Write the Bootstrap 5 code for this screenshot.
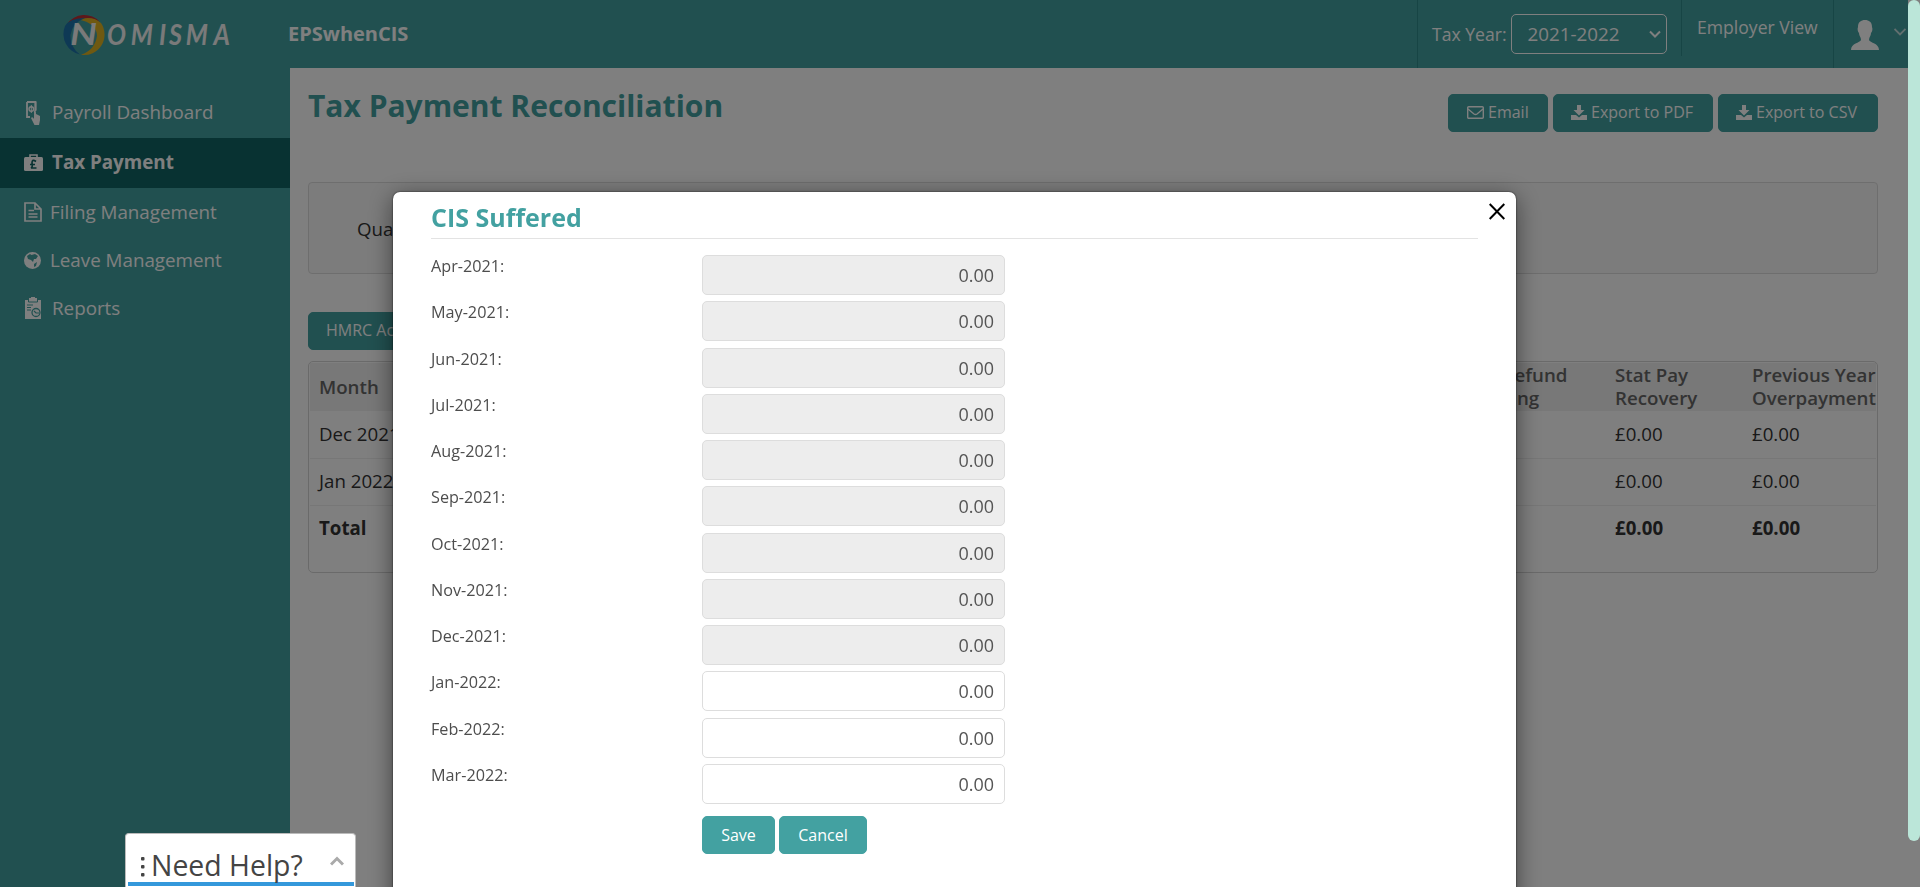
<!DOCTYPE html>
<html lang="en">
<head>
<meta charset="utf-8">
<meta name="viewport" content="width=device-width, initial-scale=1">
<title>Tax Payment Reconciliation</title>
<link href="https://cdn.jsdelivr.net/npm/bootstrap@5.3.0/dist/css/bootstrap.min.css" rel="stylesheet">
<style>
  html, body { height: 100%; overflow: hidden; }
  body { font-family: "Open Sans", sans-serif; font-size: 18.700px; line-height: 1.3; color: #333; background: #fff; }
  svg { display: block; flex: none; }
  .app-shell { width: 1908px; height: 887px; }
  .teal-bg { background: #43a1a1; }
  .top-bar { height: 68px; color: #fff; font-size: 17.600px; }
  .brand-box { width: 288px; padding-left: 61px; }
  .company { font-size: 20px; }
  .top-cell { border-left: 1px solid #2f8b8b; }
  .year-select { width: 156px; height: 40px; border: 1px solid #fff; border-radius: 5px; padding: 0 5px 0 16px; font-size: 18.800px; }
  .side-menu { width: 290px; flex: none; padding-top: 19px; }
  .side-menu .nav-link { height: 48px; padding: 0; color: #fff; font-size: 18.800px; white-space: nowrap; }
  .side-menu .nav-link.active { height: 50px; padding-bottom: 2px; background: #116464; font-weight: 700; }
  .icon-slot { flex: none; width: 28px; margin-left: 24px; }
  .icon-slot.snug { width: 26px; }
  .page-title { color: #43a1a1; font-size: 30px; font-weight: 700; line-height: 40px; margin: 18px 0 0; }
  .btn-teal { --bs-btn-bg: #43a1a1; --bs-btn-color: #fff; --bs-btn-border-color: #43a1a1; --bs-btn-hover-bg: #348989; --bs-btn-hover-color: #fff; height: 38px; padding: 0 17px; font-size: 16px; line-height: 35px; border-radius: 5px; }
  .page-action { padding-bottom: 2px; gap: 4px; }
  .quarter-box { height: 92px; margin-top: 50px; background: #f9f9f9; border: 1px solid #ddd; border-radius: 4px; padding: 2px 0 0 48px; }
  .grid-box { height: 212px; margin-top: 11px; border: 1px solid #d5d5d5; border-radius: 5px; padding: 1px; }
  .grid-box table { table-layout: fixed; width: 100%; margin: 0; border-collapse: collapse; }
  .grid-box th, .grid-box td { padding: 0 0 2px 9px; height: 47px; line-height: 23px; vertical-align: middle; }
  .grid-box thead th { background: #f0f0f0; color: #666; font-weight: 600; height: 48px; }
  .grid-box tbody tr { border-bottom: 1px solid #eee; }
  .grid-box tbody tr:last-child { border: 0; }
  .scroll-track { width: 12px; height: 887px; background: #fff; }
  .scroll-thumb { position: relative; z-index: 1060; height: 841px; background: #bbe6d9; border-radius: 6px; }
  .cis-dialog { max-width: none; width: 1123px; margin: 192px 0 0 393px; }
  .cis-dialog .modal-content { height: 720px; border: 0; border-radius: 7px; box-shadow: 0 5px 24px rgba(0,0,0,.5), 0 0 2px rgba(0,0,0,.8); padding: 0 38px; }
  .cis-title { color: #43a1a1; font-size: 25px; font-weight: 700; line-height: 34px; height: 47px; padding-top: 8px; margin: 0 0 16px; border-bottom: 1px solid #e3e3e3; }
  .cis-close { position: absolute; right: 11px; top: 11px; padding: 0; border: 0; background: none; }
  .cis-row { height: 46.27px; }
  .cis-row label { width: 271px; font-size: 16.200px; line-height: 22px; color: #4d4d4d; }
  .cis-row .form-control { width: 303px; height: 40px; border: 1px solid #ddd; border-radius: 5px; color: #555; font-size: 18px; padding: 0 10px; text-align: right; }
  .cis-row .form-control:disabled { background: #ededed; }
  .cis-actions { margin-left: 271px; margin-top: 6px; gap: 4px; }
  .help-tab { position: absolute; z-index: 1070; left: 125px; top: 833px; width: 231px; height: 54px; background: #fff; border: 1px solid #bbb; border-bottom: 0; border-radius: 4px 4px 0 0; padding: 0 1px 1px 2px; color: #444; font-size: 28.400px; line-height: 38px; }
  .help-label { border-bottom: 4px solid #3498db; padding: 12px 10px 0 13px; height: 52px; gap: 6px; }
</style>
</head>
<body>
<div class="d-flex">
  <div class="app-shell d-flex flex-column">
    <header class="top-bar teal-bg d-flex">
      <div class="brand-box d-flex align-items-center">
        <svg width="172" height="46" viewBox="0 0 172 46">
          <path d="M6 13A21 21 0 0 1 39 11Q24 3 6 13Z" fill="#bd3035"/>
          <path d="M17 8.500Q32 4 40 12A20.500 20.500 0 0 1 20 43.800Q34 39 36 25Q36 12 17 8.500Z" fill="#dfb322"/>
          <path d="M24 7Q9 7 4 15A21 21 0 0 0 19 43.500Q9 36 9.500 24Q11 12 24 7Z" fill="#1d73aa"/>
          <g font-family="Lato" font-style="italic" font-weight="700" fill="#f5f5f5" transform="scale(.9 1)">
            <text x="10" y="34" font-size="30" textLength="30" lengthAdjust="spacingAndGlyphs">N</text>
            <text x="51 77.500 109 120 138.500 169.500" y="34" font-size="28">OMISMA</text>
          </g>
        </svg>
      </div>
      <div class="company fw-bold flex-grow-1 align-self-center">EPSwhenCIS</div>
      <div class="top-cell d-flex align-items-center" style="width:264px;padding-left:14px;gap:4px">
        <span class="text-nowrap">Tax Year:</span>
        <div class="year-select d-flex align-items-center justify-content-between"><span>2021-2022</span>
          <svg width="12" height="9" viewBox="0 0 12 9" fill="none" stroke="#fff" stroke-width="2"><path d="M1 1.500 6 6.500 11 1.500"/></svg>
        </div>
      </div>
      <div class="top-cell text-nowrap" style="width:152px;height:56px;padding:16px 0 0 15px">Employer View</div>
      <div class="top-cell d-flex" style="width:75px;padding:20px 0 0 17px;gap:15px">
        <svg width="28" height="30" viewBox="0 0 28 30" fill="#fff"><path d="M14 0C18 0 21 2 21 7C22 9 21 12 20 13C20 16 18 17 18 20C19 23 28 23 28 30H0C0 23 9 23 10 20C10 17 8 16 8 13C7 12 6 9 7 7C7 2 10 0 14 0Z"/></svg>
        <svg class="mt-2" width="12" height="8" viewBox="0 0 12 8" fill="none" stroke="#c4dede" stroke-width="1.800"><path d="M.5 1 6 6.500 11.500 1"/></svg>
      </div>
    </header>
    <div class="d-flex flex-grow-1">
      <nav class="side-menu teal-bg nav flex-column flex-nowrap">
        <a class="nav-link d-flex align-items-center" style="height:51px" href="#"><span class="icon-slot">
          <svg style="margin-left:2px" width="15" height="24" viewBox="0 0 15 24"><path d="M1 1H9.500V9M1 1V16H4" fill="none" stroke="#fff" stroke-width="1.800"/><path d="M9.500 1V10" stroke="#fff" stroke-width="1.800"/><circle cx="5.300" cy="8" r="2.300" fill="none" stroke="#fff" stroke-width="1.400"/><path d="M5.300 4V12" stroke="#fff"/><path d="M8 9.500Q10 8 10 13L14 15V19L13 24H8.500L5 17Q6.500 15 8 18Z" fill="#fff"/></svg></span>Payroll Dashboard</a>
        <a class="nav-link active d-flex align-items-center" href="#"><span class="icon-slot">
          <svg width="19" height="17" viewBox="0 0 19 17"><path d="M6 4V1H13V4" fill="none" stroke="#fff" stroke-width="1.600"/><rect y="3" width="19" height="14" rx="1.500" fill="#fff"/><path d="M12 7.500Q8 4.500 8 9Q9 13 7 14H12.500M6 10.500H11" fill="none" stroke="#116464" stroke-width="1.700"/></svg></span>Tax Payment</a>
        <a class="nav-link d-flex align-items-center" href="#"><span class="icon-slot snug">
          <svg width="18" height="20" viewBox="0 0 18 20" fill="none" stroke="#fff" stroke-width="1.700"><path d="M1 1H11L17 7V19H1ZM11 1V7H17M4.500 8.500H10M4.500 12H13.500M4.500 15H13.500"/></svg></span>Filing Management</a>
        <a class="nav-link d-flex align-items-center" href="#"><span class="icon-slot snug">
          <svg width="17" height="17" viewBox="0 0 17 17"><circle cx="8.500" cy="8.500" r="8.500" fill="#fff"/><path d="M3 4 6 2 7.500 3 11 2 14 4 12 7 10 7 9 10 7 8 4 7ZM10 12 13 10 12 14 10 15Z" fill="#43a1a1"/></svg></span>Leave Management</a>
        <a class="nav-link d-flex align-items-center" href="#"><span class="icon-slot">
          <svg width="18" height="22" viewBox="0 0 18 22"><path d="M1 3H17V22H1Z" fill="#fff"/><path d="M5 1H7V0H11V1H13V4H5Z" fill="#fff"/><path d="M4.500 2.500V5H13.500V2.500M3 8H9M3 10.500H7M3 13H7" fill="none" stroke="#43a1a1"/><circle cx="12" cy="15.500" r="4" fill="#fff" stroke="#43a1a1" stroke-width="1.300"/><path d="M10 14 12 16H15" fill="none" stroke="#43a1a1" stroke-width="1.200"/></svg></span>Reports</a>
      </nav>
      <main class="flex-grow-1" style="padding:0 30px 0 18px">
        <div class="d-flex justify-content-between">
          <h1 class="page-title">Tax Payment Reconciliation</h1>
          <div class="d-flex" style="gap:5px;padding-top:26px;height:64px">
            <button class="btn btn-teal page-action d-flex align-items-center" style="width:100px;padding-left:18px"><svg width="17" height="13" viewBox="0 0 17 13" fill="none" stroke="#fff" stroke-width="1.400"><rect x=".7" y=".7" width="15.600" height="11.600" rx="1"/><path d="M1 3 7 8Q8.500 9 10 8L16 3"/></svg>Email</button>
            <button class="btn btn-teal page-action d-flex align-items-center text-nowrap" style="width:160px"><svg width="16" height="15" viewBox="0 0 16 15" fill="#fff"><path d="M6 0H10V5H13.500L8 10.500 2.500 5H6ZM0 10H5L8 12.500 11 10H16V15H0Z"/></svg>Export to PDF</button>
            <button class="btn btn-teal page-action d-flex align-items-center text-nowrap" style="width:160px"><svg width="16" height="15" viewBox="0 0 16 15" fill="#fff"><path d="M6 0H10V5H13.500L8 10.500 2.500 5H6ZM0 10H5L8 12.500 11 10H16V15H0Z"/></svg>Export to CSV</button>
          </div>
        </div>
        <div class="quarter-box d-flex align-items-center">Quarter</div>
        <button class="btn btn-teal page-action d-block" style="margin-top:38px">HMRC Account</button>
        <div class="grid-box">
          <table>
            <colgroup><col style="width:1147px"><col style="width:149px"><col style="width:137px"><col></colgroup>
            <thead><tr><th>Month</th><th class="text-nowrap">Tax Refund<br>Pending</th><th>Stat Pay<br>Recovery</th><th class="text-nowrap">Previous Year<br>Overpayment</th></tr></thead>
            <tbody>
              <tr><td>Dec 2021</td><td></td><td>£0.00</td><td>£0.00</td></tr>
              <tr><td>Jan 2022</td><td></td><td>£0.00</td><td>£0.00</td></tr>
              <tr class="fw-bold"><td>Total</td><td></td><td>£0.00</td><td>£0.00</td></tr>
            </tbody>
          </table>
        </div>
      </main>
    </div>
  </div>
  <div class="scroll-track"><div class="scroll-thumb"></div></div>
</div>

<div class="modal-backdrop show"></div>
<div class="modal d-block overflow-hidden" tabindex="-1" style="width:1908px">
  <div class="modal-dialog cis-dialog">
    <div class="modal-content">
      <h2 class="cis-title">CIS Suffered</h2>
      <button class="cis-close" aria-label="Close"><svg width="16" height="17" viewBox="0 0 16 17" stroke="#000" stroke-width="2"><path d="M.7 1 15.300 16M15.300 1 .7 16"/></svg></button>
      <form id="months">
        <div class="cis-row d-flex"><label>Apr-2021:</label><input class="form-control" value="0.00" disabled></div>
        <div class="cis-row d-flex"><label>May-2021:</label><input class="form-control" value="0.00" disabled></div>
        <div class="cis-row d-flex"><label>Jun-2021:</label><input class="form-control" value="0.00" disabled></div>
        <div class="cis-row d-flex"><label>Jul-2021:</label><input class="form-control" value="0.00" disabled></div>
        <div class="cis-row d-flex"><label>Aug-2021:</label><input class="form-control" value="0.00" disabled></div>
        <div class="cis-row d-flex"><label>Sep-2021:</label><input class="form-control" value="0.00" disabled></div>
        <div class="cis-row d-flex"><label>Oct-2021:</label><input class="form-control" value="0.00" disabled></div>
        <div class="cis-row d-flex"><label>Nov-2021:</label><input class="form-control" value="0.00" disabled></div>
        <div class="cis-row d-flex"><label>Dec-2021:</label><input class="form-control" value="0.00" disabled></div>
        <div class="cis-row d-flex"><label>Jan-2022:</label><input class="form-control" value="0.00"></div>
        <div class="cis-row d-flex"><label>Feb-2022:</label><input class="form-control" value="0.00"></div>
        <div class="cis-row d-flex"><label>Mar-2022:</label><input class="form-control" value="0.00"></div>
        <div class="cis-actions d-flex">
          <button type="button" class="btn btn-teal" style="width:73px">Save</button>
          <button type="button" class="btn btn-teal" style="width:88px">Cancel</button>
        </div>
      </form>
    </div>
  </div>
</div>

<div class="help-tab">
  <div class="help-label d-flex">
    <svg style="margin-top:11px" width="4" height="20" viewBox="0 0 4 20" fill="#444"><rect width="3.500" height="3.500" rx="1"/><rect y="8" width="3.500" height="3.500" rx="1"/><rect y="16" width="3.500" height="3.500" rx="1"/></svg>
    <span class="flex-grow-1 text-nowrap">Need Help?</span>
    <svg style="margin-top:10px" width="14" height="10" viewBox="0 0 14 10" fill="none" stroke="#aaa" stroke-width="3"><path d="M1 8.500 7 2.500 13 8.500"/></svg>
  </div>
</div>
<script src="https://cdn.jsdelivr.net/npm/bootstrap@5.3.0/dist/js/bootstrap.bundle.min.js"></script>
</body>
</html>
